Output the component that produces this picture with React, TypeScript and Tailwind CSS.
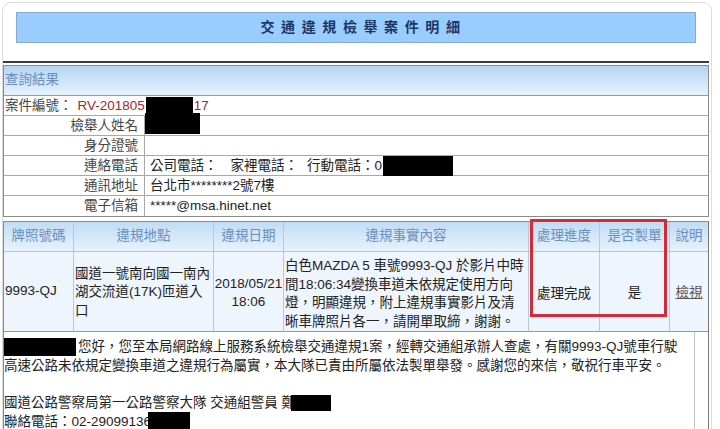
import React from "react";

const font = { fontFamily: '"Liberation Sans", "Noto Sans CJK TC", sans-serif' };

const infoRows = [
	{ label: "檢舉人姓名", value: <span className="inline-block w-[55px] h-[21px] bg-black align-top -mt-[3px] -ml-[5px]" /> },
	{ label: "身分證號", value: null },
	{
		label: "連絡電話",
		value: (
			<>
				<span>公司電話：</span>
				<span className="ml-[13px]">家裡電話：</span>
				<span className="ml-[9px]">行動電話：0</span>
				<span className="inline-block w-[70px] h-[20px] bg-black align-top ml-[1px]" />
			</>
		),
	},
	{ label: "通訊地址", value: "台北市********2號7樓" },
	{ label: "電子信箱", value: "*****@msa.hinet.net" },
];

const heads = ["牌照號碼", "違規地點", "違規日期", "違規事實內容", "處理進度", "是否製單", "說明"];
const widths = ["w-[70px]", "w-[140px]", "w-[70px]", "w-[245px]", "w-[71px]", "w-[70px]", "flex-1"];

export default function App() {
	return (
		<div className="w-[720px] h-[429px] bg-white overflow-hidden text-[13.5px] text-[#222]" style={font}>
			{/* outer rounded panel */}
			<div className="ml-[2px] mt-[2px] w-[710px] h-[460px] border border-[#dcdcdc] rounded-[9px] pt-[9px]">
				{/* title */}
				<div className="ml-[13px] w-[680px] h-[31px] bg-[#99ccff] border border-[#86a9cc] flex items-center justify-center pl-[15px]">
					<h1 className="text-[14px] font-bold tracking-[6.6px] text-[#1c3566]">交通違規檢舉案件明細</h1>
				</div>

				<div className="mt-[18px] w-[706px] border-t-2 border-[#3c3c3c] pt-[2px] relative">
					{/* 查詢結果 */}
					<div className="border border-[#8a8a8a]">
						<div className="h-[30px] border-b border-[#9a9a9a] bg-gradient-to-b from-[#b4d5f3] to-[#e6f2fc] flex items-center px-[1px] text-[#6a8fbd]">
							查詢結果
						</div>
						<div className="h-[20px] border-b border-[#a8a8a8] flex items-center leading-[20px]">
							<span className="text-[#444] pl-[1px]">案件編號：</span>
							<span className="ml-[5px] text-[#a3262c]">RV-201805</span>
							<span className="inline-block w-[47px] h-[18px] bg-black ml-[1px]" />
							<span className="text-[#a3262c] ml-[1px]">17</span>
						</div>
						{infoRows.map((r, k) => (
							<div key={k} className={`h-[20px] flex leading-[20px] ${k < infoRows.length - 1 ? "border-b border-[#a8a8a8]" : ""}`}>
								<div className="w-[141px] border-r border-[#a8a8a8] text-right pr-[6px] text-[#444]">{r.label}</div>
								<div className="pl-[5px] flex items-start whitespace-nowrap">{r.value}</div>
							</div>
						))}
					</div>

					{/* 違規明細 */}
					<div className="mt-[4px] border border-[#8a8a8a] border-r-[#777]">
						<div className="h-[30px] flex bg-gradient-to-b from-[#c2dcf5] to-[#e7f2fc] border-b border-[#b3c4d4] text-[#6a8fbd]">
							{heads.map((h, k) => (
								<div key={k} className={`${widths[k]} ${k < 6 ? "border-r border-[#b8c8d8]" : ""} flex items-center justify-center`}>
									{h}
								</div>
							))}
						</div>
						<div className="h-[79px] flex bg-[#eef5fc] leading-[18.5px]">
							<div className="w-[70px] border-r border-[#b8c8d8] flex items-center pl-[1px]">9993-QJ</div>
							<div className="w-[140px] border-r border-[#b8c8d8] flex items-center pl-[1px] pt-[2px]">
								國道一號南向國一南內湖交流道(17K)匝道入口
							</div>
							<div className="w-[70px] border-r border-[#b8c8d8] flex items-center justify-center text-center pt-[3px]">
								2018/05/21
								<br />
								18:06
							</div>
							<div className="w-[245px] border-r border-[#b8c8d8] pl-[1px] pr-[4px] pt-[5px]">
								白色MAZDA 5 車號9993-QJ 於影片中時間18:06:34變換車道未依規定使用方向燈，明顯違規，附上違規事實影片及清晰車牌照片各一，請開單取締，謝謝。
							</div>
							<div className="w-[71px] border-r border-[#b8c8d8] flex items-center justify-center pt-[6px]">處理完成</div>
							<div className="w-[70px] border-r border-[#b8c8d8] flex items-center justify-center pt-[4px]">是</div>
							<div className="flex-1 flex items-center justify-center pt-[4px]">
								<span className="underline text-[#555]">檢視</span>
							</div>
						</div>
						{/* reply message */}
						<div className="h-[100px] flex border-t border-[#9a9a9a]">
							<div className="w-[691px] border-r border-[#c4c4c4] pt-[6px] leading-[18.6px] whitespace-nowrap">
								<div className="flex items-center">
									<span className="inline-block w-[72px] h-[18px] bg-black" />
									<span className="ml-[2px]">您好，您至本局網路線上服務系統檢舉交通違規1案，經轉交通組承辦人查處，有關9993-QJ號車行駛</span>
								</div>
								<div>高速公路未依規定變換車道之違規行為屬實，本大隊已責由所屬依法製單舉發。感謝您的來信，敬祝行車平安。</div>
								<div className="h-[18.6px]" />
								<div className="flex items-center">
									<span>國道公路警察局第一公路警察大隊 交通組警員 鄭</span>
									<span className="inline-block w-[40px] h-[16px] bg-black -ml-[4px]" />
								</div>
								<div className="flex items-center">
									<span>聯絡電話：02-29099136</span>
									<span className="inline-block w-[42px] h-[19px] bg-black -ml-[3px]" />
								</div>
							</div>
						</div>
					</div>

					{/* highlight box */}
					<div className="absolute left-[527px] top-[156px] w-[137px] h-[98px] border-[3px] border-[#d42b3b]" />
				</div>
			</div>
		</div>
	);
}
